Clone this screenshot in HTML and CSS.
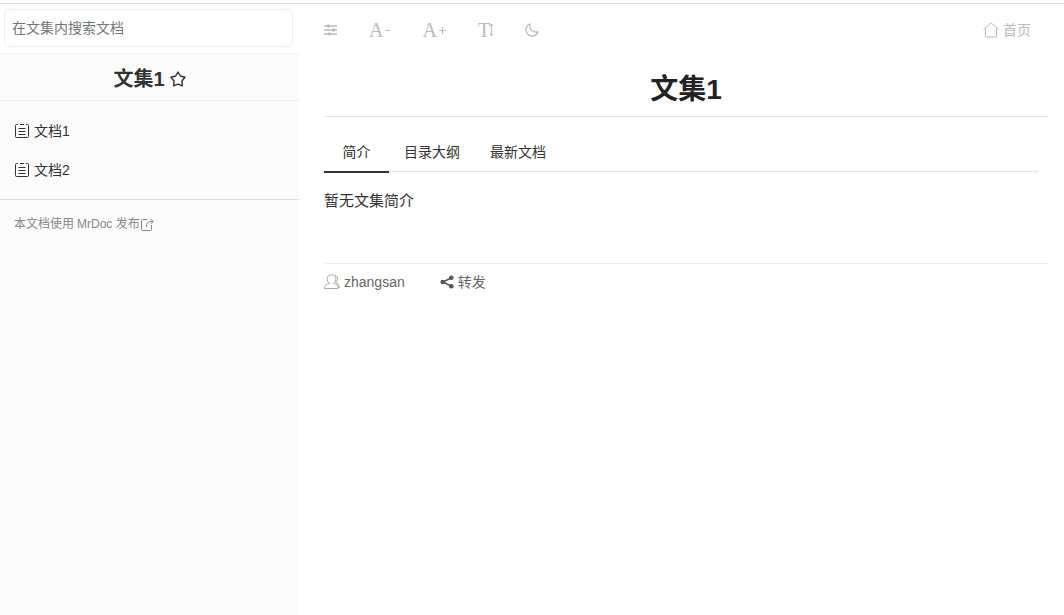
FILE: index.html
```html
<!DOCTYPE html>
<html lang="zh-CN">
<head>
<meta charset="utf-8">
<meta name="viewport" content="width=device-width, initial-scale=1">
<title>文集1</title>
<link rel="stylesheet" href="styles.css">
</head>
<body>
<div class="layout">
  <aside class="sidebar">
    <form class="search">
      <input class="search-input" type="text" placeholder="在文集内搜索文档" aria-label="在文集内搜索文档">
    </form>
    <div class="side-body">
      <div class="side-title">
        <h2 class="side-heading">文集1</h2>
        <button class="icon-button star" type="button" aria-label="收藏">
          <svg width="16" height="16" viewBox="0 0 16 16" fill="none" stroke="currentColor" stroke-width="1.4" stroke-linejoin="round"><path d="M8 1 10.300 5 15 6.200 12 10 12.300 14.800 8 13.200 3.700 14.800 4 10 1 6.200 5.700 5Z"/></svg>
        </button>
      </div>
      <nav class="docs">
        <a class="doc" href="#doc1">
          <svg width="14" height="14" viewBox="0 0 14 14" fill="none" stroke="currentColor"><path d="M3 .5H1.500Q.5.5.5 1.500v11q0 1 1 1h11q1 0 1-1v-11q0-1-1-1H11M5 .5h4M3.500 4.500h7M3.500 7.500h7M3.500 10.500h7"/></svg>
          <span>文档1</span>
        </a>
        <a class="doc" href="#doc2">
          <svg width="14" height="14" viewBox="0 0 14 14" fill="none" stroke="currentColor"><path d="M3 .5H1.500Q.5.5.5 1.500v11q0 1 1 1h11q1 0 1-1v-11q0-1-1-1H11M5 .5h4M3.500 4.500h7M3.500 7.500h7M3.500 10.500h7"/></svg>
          <span>文档2</span>
        </a>
      </nav>
      <div class="credit">
        <span>本文档使用</span>
        <a class="credit-link" href="#mrdoc">MrDoc 发布<svg width="13" height="13" viewBox="0 0 13 13" fill="none" stroke="currentColor"><path d="M6.500 1.500h-5q-1 0-1 1v9q0 1 1 1h8q1 0 1-1V7M5.500 9Q5 4 9 3.500h3M9.500.8l2.700 2.700L9.500 6.200"/></svg></a>
      </div>
    </div>
  </aside>
  <main class="main">
    <header class="toolbar">
      <div class="tools">
        <button class="icon-button" type="button" aria-label="切换目录">
          <svg width="13" height="14" viewBox="0 0 13 14" fill="none" stroke="currentColor" stroke-width="1.300"><path d="M0 3h13M0 7h13M0 11h13"/><g fill="currentColor" stroke="none"><rect x="3" y="1.500" width="3" height="3" rx="1"/><rect x="8" y="5.500" width="3" height="3" rx="1"/><rect x="4" y="9.500" width="3" height="3" rx="1"/></g></svg>
        </button>
        <button class="icon-button letter" type="button" aria-label="缩小字号"><span>A</span><svg width="7" height="8" viewBox="0 0 7 8" stroke="currentColor"><path d="M2 4.500h5"/></svg></button>
        <button class="icon-button letter" type="button" aria-label="放大字号"><span>A</span><svg width="9" height="8" viewBox="0 0 9 8" stroke="currentColor"><path d="M2 4.500h7M5.500 1v7"/></svg></button>
        <button class="icon-button letter" type="button" aria-label="切换字体"><span>T</span><svg width="3" height="14" viewBox="0 0 3 14" fill="none" stroke="currentColor"><path d="M0 3 1.500 1 3 3M1.500 1v12M0 11l1.500 2L3 11"/></svg></button>
        <button class="icon-button" type="button" aria-label="夜间模式">
          <svg width="14" height="14" viewBox="0 0 14 14" fill="none" stroke="currentColor" stroke-width="1.200" stroke-linejoin="round"><path d="M5.300.8A6.300 6.300 0 1 0 13.200 8.700 5.400 5.400 0 0 1 8.500 8.300 5.300 5.300 0 0 1 5.300.8Z"/></svg>
        </button>
      </div>
      <a class="home" href="#home">
        <svg width="16" height="16" viewBox="0 0 16 16" fill="none" stroke="currentColor" stroke-linejoin="round"><path d="M.5 7.500 8 .8l7.500 6.700M2.500 6v9h11V6"/></svg>
        <span>首页</span>
      </a>
    </header>
    <h1 class="title">文集1</h1>
    <div class="tabs" role="tablist">
      <button class="tab active" type="button" role="tab" aria-selected="true">简介</button>
      <button class="tab" type="button" role="tab" aria-selected="false">目录大纲</button>
      <button class="tab" type="button" role="tab" aria-selected="false">最新文档</button>
    </div>
    <p class="intro">暂无文集简介</p>
    <footer class="meta">
      <a class="meta-item" href="#zhangsan">
        <svg class="user" width="16" height="16" viewBox="0 0 16 16" fill="none" stroke="currentColor"><path d="M5.500 9.300C1.500 7 3 .8 7.500.8S13.500 7 9.500 9.300q4.500.8 4.500 5.200H.5Q.5 10.500 5.500 9.300M11 1.200q3 1 2.500 4.300-.2 2-1.700 3 3.700 1 3.700 5H14"/></svg>
        <span>zhangsan</span>
      </a>
      <button class="icon-button meta-item" type="button">
        <svg class="share" width="14" height="14" viewBox="0 0 14 14" fill="currentColor"><path d="m11 3-8 4 8 4" fill="none" stroke="currentColor" stroke-width="1.500"/><circle cx="11.300" cy="2.700" r="2.300"/><circle cx="2.700" cy="7" r="2.300"/><circle cx="11.300" cy="11.300" r="2.300"/></svg>
        <span>转发</span>
      </button>
    </footer>
  </main>
</div>
</body>
</html>
```
FILE: styles.css
```css
* { box-sizing: border-box; }
body {
  margin: 0;
  padding-top: 3px;
  background: #fff;
  color: #333;
  font: 14px/24px "Liberation Sans", "Noto Sans CJK SC", sans-serif;
}
a { color: inherit; text-decoration: none; }
svg { display: block; flex: none; }
button, input { font: inherit; color: inherit; }
.icon-button {
  display: flex;
  align-items: center;
  padding: 0;
  border: 0;
  background: none;
}
.layout {
  display: flex;
  min-height: calc(100vh - 3px);
  border-top: 1px solid #ddd;
}
.sidebar {
  display: flex;
  flex-direction: column;
  flex: 0 0 299px;
}
.search { padding: 5px 6px 6px 4px; }
.search-input {
  display: block;
  width: 100%;
  height: 38px;
  padding: 0 7px;
  border: 1px solid #eee;
  border-radius: 6px;
  background: #fff;
}
.search-input::placeholder { color: #757575; opacity: 1; }
.side-body {
  flex: 1;
  border-top: 1px solid #f2f2f2;
  background: #fbfbfb;
}
.side-title {
  display: flex;
  align-items: center;
  justify-content: center;
  gap: 5px;
  height: 47px;
  padding-top: 3px;
  border-bottom: 1px solid #eee;
}
.side-heading { margin: 0; font-size: 20px; line-height: 40px; }
.docs {
  padding: 10px 0;
  border-bottom: 1px solid #ddd;
}
.doc {
  display: flex;
  align-items: center;
  gap: 5px;
  height: 39px;
  padding: 0 15px;
}
.credit {
  display: flex;
  gap: 3px;
  padding: 12px 14px;
  color: #888;
  font-size: 12px;
}
.credit-link { display: flex; align-items: center; gap: 1px; }
.main { flex: 1; min-width: 0; padding: 0 16px 0 25px; }
.toolbar {
  display: flex;
  align-items: center;
  justify-content: space-between;
  height: 51px;
  padding-right: 17px;
  color: #bbb;
}
.tools { display: flex; align-items: center; gap: 32px; }
.letter { font: 20px/24px "Liberation Serif", serif; }
.home { display: flex; align-items: center; gap: 4px; }
.title {
  margin: 0;
  padding: 13px 0 5px;
  border-bottom: 1px solid #e5e5e5;
  font-size: 28px;
  line-height: 43px;
  text-align: center;
  color: #222;
}
.tabs {
  display: flex;
  margin: 15px 10px 0 0;
  border-bottom: 1px solid #e5e5e5;
}
.tab {
  min-width: 65px;
  height: 41px;
  margin-bottom: -2px;
  padding: 0 15px;
  border: 0;
  border-bottom: 2px solid transparent;
  background: none;
}
.tab.active { border-bottom-color: #333; }
.intro { margin: 0; padding: 17px 0 50px; font-size: 15px; }
.meta {
  display: flex;
  gap: 35px;
  padding-top: 6px;
  border-top: 1px solid #eee;
  color: #666;
}
.meta-item { display: flex; align-items: center; gap: 4px; }
.user { color: #aaa; }
.share { color: #555; }
```
